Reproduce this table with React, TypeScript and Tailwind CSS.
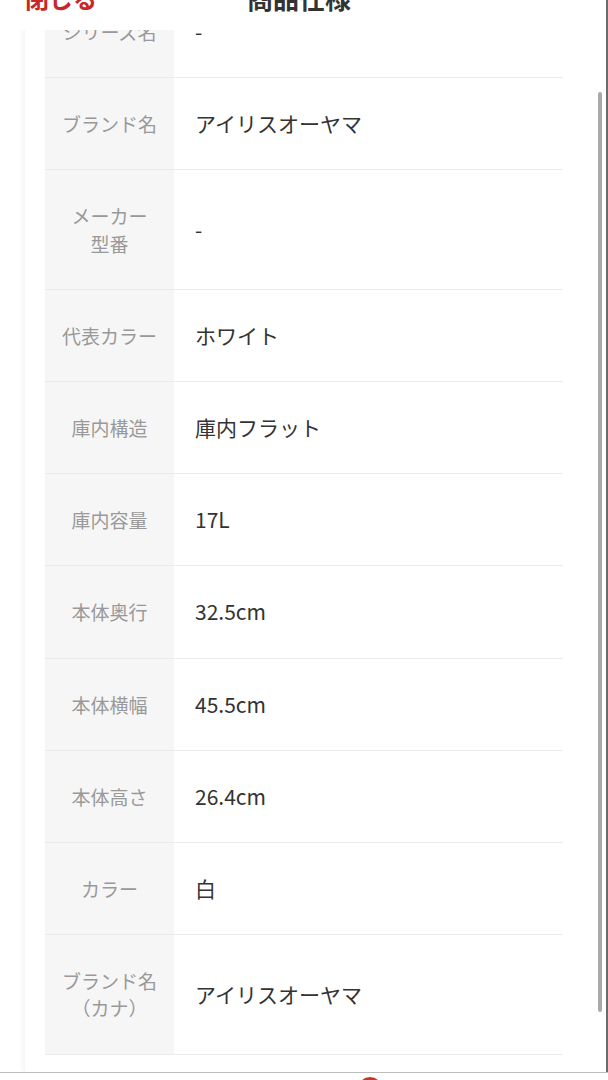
const rows: { label: string[]; value: string }[] = [
  { label: ['シリーズ名'], value: '-' },
  { label: ['ブランド名'], value: 'アイリスオーヤマ' },
  { label: ['メーカー', '型番'], value: '-' },
  { label: ['代表カラー'], value: 'ホワイト' },
  { label: ['庫内構造'], value: '庫内フラット' },
  { label: ['庫内容量'], value: '17L' },
  { label: ['本体奥行'], value: '32.5cm' },
  { label: ['本体横幅'], value: '45.5cm' },
  { label: ['本体高さ'], value: '26.4cm' },
  { label: ['カラー'], value: '白' },
  { label: ['ブランド名', '（カナ）'], value: 'アイリスオーヤマ' },
];

export default function App() {
  return (
    <div
      className="flex h-[1080px] w-[608px] flex-col overflow-hidden bg-white"
      style={{ fontFamily: '"Noto Sans CJK JP", "Noto Sans", sans-serif' }}
    >
      <div className="flex h-[30px] shrink-0 border-r-2 border-[#6b6b6b] bg-white">
        <div className="mt-[-14px] flex h-[24px] w-full items-center">
          <span className="ml-[25px] text-[24px] font-bold leading-[24px] text-[#c62828]">閉じる</span>
          <span className="ml-[150px] text-[26px] font-bold leading-[24px] text-[#333]">商品仕様</span>
        </div>
      </div>

      <div className="flex min-h-0 flex-1 border-r-2 border-[#6b6b6b]">
        <div className="min-h-0 w-[583px] overflow-hidden pl-[25px]">
          <div className="mt-[-64px] bg-white px-[20px] pt-[20px] pb-[18px] shadow-[0_0_8px_rgba(0,0,0,0.08)]">
            {rows.map((r, i) => (
              <div key={i} className="flex border-b border-[#ebebeb]">
                <div className="flex w-[129px] shrink-0 flex-col items-center justify-center bg-[#f6f6f6] py-[32px] text-[19px] leading-[27.2px] text-[#999]">
                  {r.label.map((l) => (
                    <span key={l}>{l}</span>
                  ))}
                </div>
                <div className="flex flex-1 items-center pl-[21px] text-[21px] leading-[27.2px] text-[#333]">
                  {r.value}
                </div>
              </div>
            ))}
          </div>
        </div>
        <div className="ml-[15px] w-[4px] pt-[62px]">
          <div className="h-[920px] w-[4px] rounded-full bg-[#a9a9a9]" />
        </div>
      </div>

      <div className="h-[8px] shrink-0 border-t border-[#bdbdbd] bg-white">
        <div className="ml-[358px] mt-[4px] h-[24px] w-[24px] rounded-full bg-[#c0392b]" />
      </div>
    </div>
  );
}
